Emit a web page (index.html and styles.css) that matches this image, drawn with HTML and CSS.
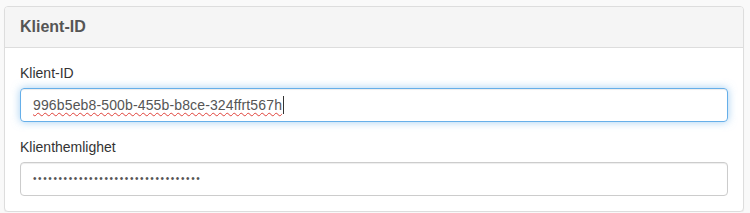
FILE: index.html
```html
<!DOCTYPE html>
<html lang="sv">
<head>
<meta charset="utf-8">
<link rel="stylesheet" href="styles.css">
</head>
<body>
<div class="panel">
  <div class="panel-heading"><h3 class="panel-title">Klient-ID</h3></div>
  <div class="panel-body">
    <div class="form-group">
      <label class="label">Klient-ID</label>
      <div class="field focus"><span class="misspelled">996b5eb8-500b-455b-b8ce-324ffrt567h</span><span class="caret"></span></div>
    </div>
    <div class="form-group last">
      <label class="label">Klienthemlighet</label>
      <div class="field"><span class="dots">•••••••••••••••••••••••••••••••••</span></div>
    </div>
  </div>
</div>
</body>
</html>
```
FILE: styles.css
```css
html, body { margin: 0; padding: 0; }
body {
  background: #f9f9f9;
  font-family: "Liberation Sans", Arial, sans-serif;
  font-size: 14px;
  line-height: 20px;
  color: #333;
  padding: 6px 6px 0 4px;
}
.panel {
  background: #fff;
  border: 1px solid #ddd;
  border-radius: 4px;
  box-shadow: 0 1px 1px rgba(0,0,0,.05);
}
.panel-heading {
  background: #f5f5f5;
  border-bottom: 1px solid #ddd;
  border-radius: 3px 3px 0 0;
  padding: 10px 15px;
}
.panel-title {
  margin: 0;
  font-size: 16px;
  line-height: 20px;
  font-weight: bold;
  color: #555;
}
.panel-body { padding: 15px; }
.form-group { margin-bottom: 15px; }
.form-group.last { margin-bottom: 0; }
.label {
  display: block;
  margin-bottom: 5px;
  color: #333;
}
.field {
  height: 34px;
  box-sizing: border-box;
  border: 1px solid #ccc;
  border-radius: 4px;
  padding: 6px 12px;
  color: #555;
  display: flex;
  align-items: center;
  box-shadow: inset 0 1px 1px rgba(0,0,0,.075);
}
.field.focus {
  border-color: #66afe9;
  box-shadow: inset 0 1px 1px rgba(0,0,0,.075), 0 0 8px rgba(102,175,233,.6);
}
.misspelled {
  letter-spacing: 0.14px;
  text-decoration: underline wavy #e0413a;
  text-decoration-thickness: 1px;
  text-underline-offset: 2px;
}
.caret {
  display: inline-block;
  width: 1px;
  height: 18px;
  background: #333;
  margin-left: 1px;
}
.dots {
  font-size: 10px;
  letter-spacing: 1.6px;
  color: #555;
}
```
